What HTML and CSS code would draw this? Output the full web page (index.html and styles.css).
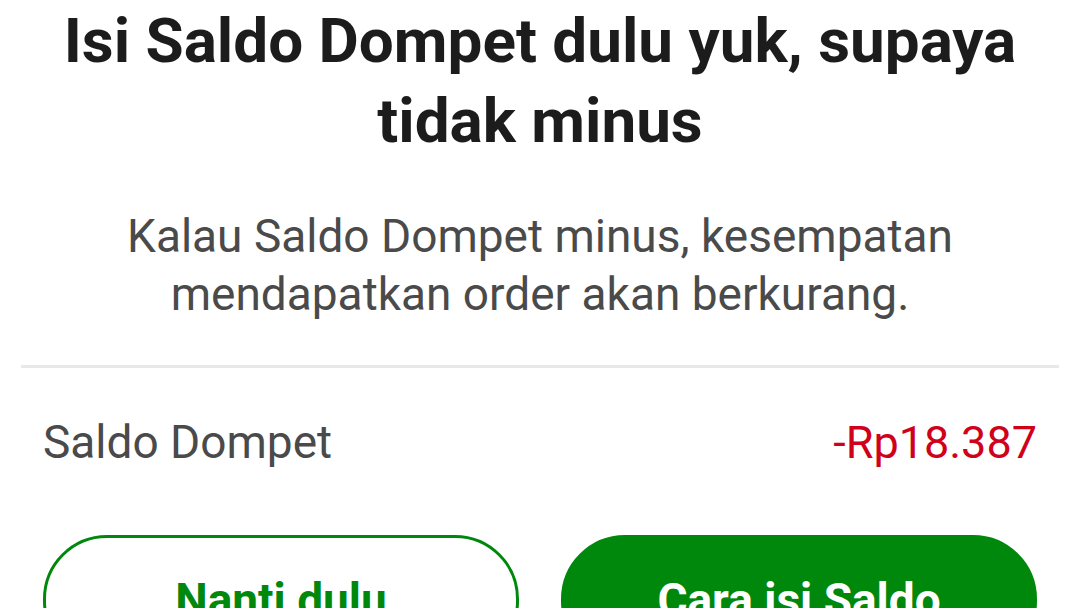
FILE: index.html
```html
<!DOCTYPE html>
<html lang="id">
<head>
    <meta charset="UTF-8">
    <meta name="viewport" content="width=device-width, initial-scale=1.0">
    <title>Saldo Dompet</title>
    <link rel="stylesheet" href="styles.css">
</head>
<body>
    <div class="sheet">
        <h1 class="title">Isi Saldo Dompet dulu yuk, supaya tidak minus</h1>
        <p class="desc">Kalau Saldo Dompet minus, kesempatan mendapatkan order akan berkurang.</p>

        <div class="divider"></div>

        <div class="row">
            <span class="label">Saldo Dompet</span>
            <span class="amount">-Rp18.387</span>
        </div>

        <div class="actions">
            <button class="btn btn-outline">Nanti dulu</button>
            <button class="btn btn-solid">Cara isi Saldo</button>
        </div>
    </div>
</body>
</html>
```

FILE: styles.css
```css
body {
    margin: 0;
    background: #ffffff;
    font-family: Roboto, "Noto Sans", Arial, sans-serif;
    overflow: hidden;
}
.sheet {
    width: 1080px;
    height: 608px;
    overflow: hidden;
}
.title {
    margin: 0;
    padding: 1px 40px 0;
    font-size: 62px;
    line-height: 80px;
    font-weight: 700;
    color: #1c1c1c;
    text-align: center;
    letter-spacing: 0;
}
.desc {
    margin: 0;
    padding: 46px 100px 0;
    font-size: 46px;
    line-height: 58px;
    color: #4a4a4a;
    text-align: center;
}
.divider {
    margin: 42px 21px 0;
    height: 3px;
    background: #e8e8e8;
}
.row {
    display: flex;
    justify-content: space-between;
    align-items: baseline;
    padding: 0 43px;
    margin-top: 46px;
    font-size: 46px;
    line-height: 56px;
}
.label {
    color: #4a4a4a;
}
.amount {
    color: #d0021b;
    font-size: 45px;
}
.actions {
    display: flex;
    gap: 42px;
    padding: 0 43px;
    margin-top: 64px;
}
.btn {
    flex: 1;
    height: 130px;
    border-radius: 64px;
    font-family: inherit;
    font-size: 46px;
    line-height: 54px;
    font-weight: 700;
    padding: 35px 0 0;
    display: flex;
    justify-content: center;
    align-items: flex-start;
    box-sizing: border-box;
}
.btn-outline {
    background: #ffffff;
    color: #00880d;
    border: 3px solid #00880d;
}
.btn-solid {
    background: #00880d;
    color: #ffffff;
    border: 3px solid #00880d;
}
```
